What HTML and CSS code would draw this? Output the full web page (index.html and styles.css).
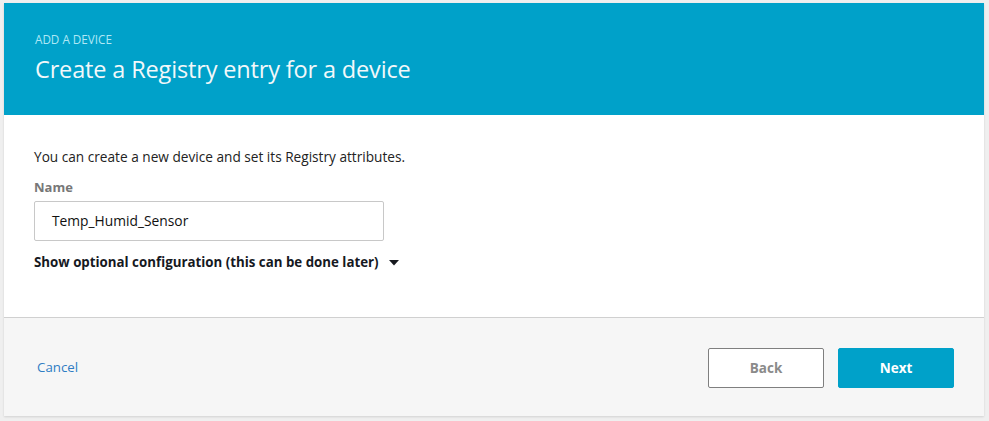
FILE: index.html
```html
<!DOCTYPE html>
<html>
<head>
<meta charset="utf-8">
<link rel="stylesheet" href="styles.css">
</head>
<body>
<div class="card">
  <header class="head">
    <div class="eyebrow">ADD A DEVICE</div>
    <h1 class="title">Create a Registry entry for a device</h1>
  </header>
  <section class="body">
    <p class="intro">You can create a new device and set its Registry attributes.</p>
    <label class="label">Name</label>
    <div class="input">Temp_Humid_Sensor</div>
    <div class="toggle">Show optional configuration (this can be done later)
      <svg class="caret" width="10" height="6" viewBox="0 0 10 6"><path d="M0 0H10L5 5.5Z" fill="#16191f"/></svg>
    </div>
  </section>
  <footer class="foot">
    <a class="cancel">Cancel</a>
    <div class="actions">
      <button class="btn btn-back">Back</button>
      <button class="btn btn-next">Next</button>
    </div>
  </footer>
</div>
</body>
</html>
```
FILE: styles.css
```css
html, body { margin: 0; padding: 0; }
body {
  background: #efefef;
  font-family: "Open Sans", "Liberation Sans", sans-serif;
  color: #232f3e;
  padding: 3px 5px 4px 4px;
}
.card {
  background: #fff;
  box-shadow: 0 1px 2px rgba(0,0,0,0.12);
}
.head {
  background: #00a1c9;
  height: 112px;
  box-sizing: border-box;
  padding: 29px 31px 0 31px;
}
.eyebrow {
  color: #b0e8f6;
  font-size: 11.7px;
  line-height: 14px;
}
.title {
  margin: 8px 0 0;
  color: #f2f8fa;
  font-weight: 400;
  font-size: 23.5px;
  line-height: 30px;
  letter-spacing: -0.15px;
}
.body {
  padding: 32px 30px 0 30px;
  height: 203px;
  box-sizing: border-box;
  border-bottom: 1px solid #d0d0d0;
}
.intro {
  margin: 0;
  font-size: 13.65px;
  line-height: 20px;
  color: #222;
}
.label {
  display: block;
  margin-top: 11px;
  font-size: 13px;
  font-weight: 700;
  color: #777;
  line-height: 18px;
}
.input {
  margin-top: 5px;
  width: 350px;
  height: 40px;
  box-sizing: border-box;
  border: 1px solid #c8c8c8;
  border-radius: 2px;
  padding: 0 17px;
  font-size: 13.8px;
  line-height: 38px;
  color: #111;
}
.toggle {
  margin-top: 11px;
  font-size: 13.3px;
  font-weight: 700;
  color: #16191f;
  line-height: 20px;
  display: flex;
  align-items: center;
  gap: 10px;
}
.caret { margin-top: 1px; }
.foot {
  background: #f6f6f6;
  height: 98px;
  display: flex;
  align-items: center;
  justify-content: space-between;
  padding: 0 30px 0 33px;
}
.cancel {
  color: #2f7dc4;
  font-size: 13.3px;
  margin-top: 0px;
}
.actions { display: flex; gap: 14px; margin-top: 2px; }
.btn {
  width: 116px;
  height: 40px;
  box-sizing: border-box;
  font-family: inherit;
  font-size: 13.5px;
  font-weight: 700;
  border-radius: 2px;
  cursor: pointer;
}
.btn-back {
  background: #fff;
  border: 1px solid #7f7f7f;
  color: #8a8a8a;
}
.btn-next {
  background: #00a1c9;
  border: 1px solid #00a1c9;
  color: #fff;
}
```
